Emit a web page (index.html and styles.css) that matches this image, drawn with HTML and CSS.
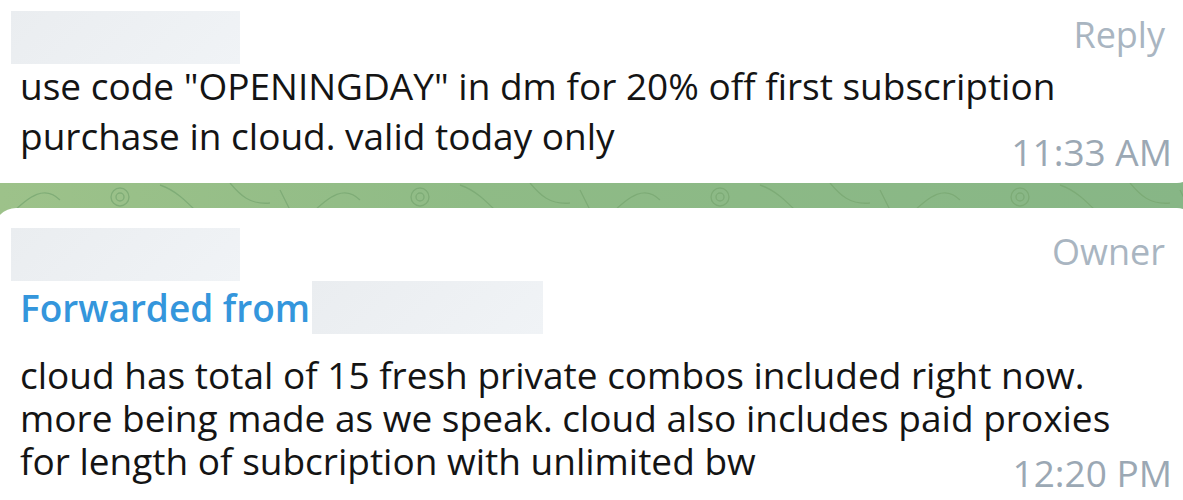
FILE: index.html
```html
<!DOCTYPE html>
<html lang="en">
<head>
<meta charset="utf-8">
<title>Chat</title>
<link rel="stylesheet" href="styles.css">
</head>
<body>
<div class="chat">
  <div class="bubble bubble-top">
    <div class="head">
      <div class="redact name"></div>
      <span class="tag">Reply</span>
    </div>
    <div class="content">
      <p class="text text-top">use code "OPENINGDAY" in dm for 20% off first subscription<br>purchase in cloud. valid today only</p>
      <span class="time">11:33 AM</span>
    </div>
  </div>
  <div class="bubble bubble-bottom">
    <div class="head">
      <div class="redact name"></div>
      <span class="tag">Owner</span>
    </div>
    <div class="fwd">
      <span class="fwd-label">Forwarded from</span>
      <div class="redact source"></div>
    </div>
    <div class="content">
      <p class="text text-bottom">cloud has total of 15 fresh private combos included right now.<br>more being made as we speak. cloud also includes paid proxies<br>for length of subcription with unlimited bw</p>
      <span class="time">12:20 PM</span>
    </div>
  </div>
</div>
</body>
</html>
```

FILE: styles.css
```css
html, body {
  margin: 0;
  padding: 0;
}
body {
  width: 1183px;
  height: 500px;
  overflow: hidden;
  font-family: "Open Sans", "Noto Sans", sans-serif;
  background-color: #8fbb86;
  background-image:
    url("data:image/svg+xml,%3Csvg xmlns='http://www.w3.org/2000/svg' width='300' height='60' viewBox='0 0 300 60'%3E%3Cg fill='none' stroke='%2379a872' stroke-width='1.4' opacity='0.8'%3E%3Cpath d='M10 60 C30 40 45 30 60 45'/%3E%3Ccircle cx='120' cy='42' r='9'/%3E%3Ccircle cx='120' cy='42' r='4'/%3E%3Cpath d='M160 30 C175 35 185 45 200 60'/%3E%3Cpath d='M230 28 C240 40 250 50 270 48'/%3E%3Cpath d='M280 35 L290 55'/%3E%3C/g%3E%3C/svg%3E"),
    linear-gradient(90deg, #9dc28a 0%, #8fbb86 40%, #87b686 100%);
  background-position: 0 155px, 0 0;
  background-repeat: repeat-x, no-repeat;
}
.chat {
  display: flex;
  flex-direction: column;
  gap: 25px;
  margin: 0 -10px 0 -6px;
}
.bubble {
  background: #ffffff;
  box-sizing: border-box;
}
.bubble-top {
  height: 183px;
  padding: 11px 0 0 17px;
  border-radius: 0 0 16px 4px;
}
.bubble-bottom {
  height: 292px;
  padding: 20px 0 0 17px;
  border-radius: 22px 16px 0 0;
}
.head {
  display: flex;
  align-items: center;
  justify-content: space-between;
  padding-right: 28px;
}
.redact {
  background: linear-gradient(135deg, #eaedf0 0%, #f0f3f6 100%);
}
.name {
  width: 229px;
  height: 53px;
}
.tag {
  font-size: 36px;
  line-height: 44px;
  margin-bottom: 5px;
  color: #a9b5c1;
}
.content {
  display: flex;
  align-items: flex-end;
  padding-right: 21px;
}
.text {
  flex: 1 1 0;
  min-width: 0;
  margin: 0 0 0 9px;
  font-size: 37px;
  color: #141414;
  white-space: nowrap;
}
.text-top {
  line-height: 50px;
  margin-top: -3px;
  margin-bottom: 11px;
}
.text-bottom {
  line-height: 43px;
  margin-top: 19px;
  margin-bottom: 11px;
}
.time {
  flex-shrink: 0;
  white-space: nowrap;
  font-size: 37px;
  line-height: 40px;
  color: #9ba8b4;
}
.fwd {
  display: flex;
  align-items: center;
  padding-left: 9px;
}
.fwd-label {
  font-size: 37px;
  font-weight: 600;
  line-height: 53px;
  color: #3496dc;
}
.source {
  width: 231px;
  height: 53px;
  margin-left: 2px;
}
```
